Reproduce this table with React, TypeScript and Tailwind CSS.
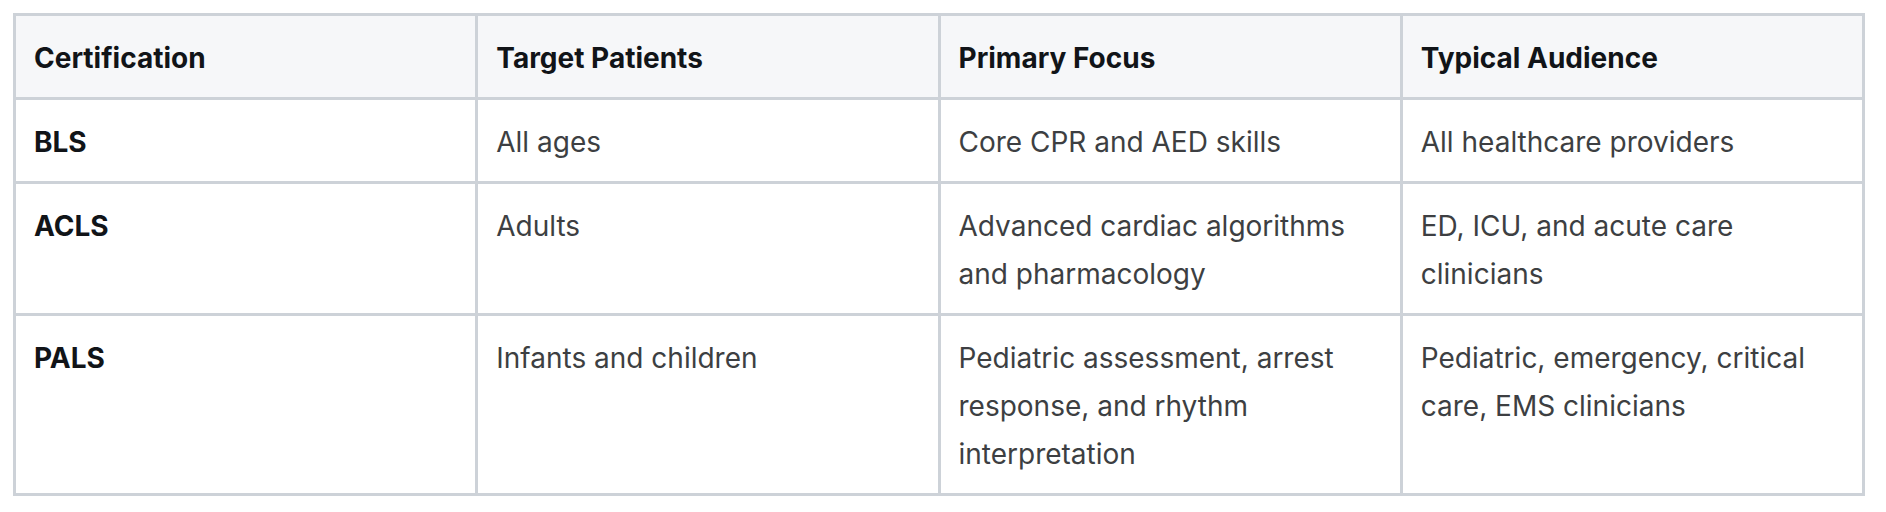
const rows = [
  {
    cert: "BLS",
    patients: "All ages",
    focus: "Core CPR and AED skills",
    audience: "All healthcare providers",
  },
  {
    cert: "ACLS",
    patients: "Adults",
    focus: "Advanced cardiac algorithms and pharmacology",
    audience: "ED, ICU, and acute care clinicians",
  },
  {
    cert: "PALS",
    patients: "Infants and children",
    focus: "Pediatric assessment, arrest response, and rhythm interpretation",
    audience: "Pediatric, emergency, critical care, EMS clinicians",
  },
];

const headers = ["Certification", "Target Patients", "Primary Focus", "Typical Audience"];

const cell =
  "align-top text-left px-[18px] pt-[18px] pb-[15px] border-r-[3px] border-b-[3px] border-[#cdd2d8]";

export default function App() {
  return (
    <div
      className="bg-white min-h-screen pl-[13px] pr-[21px] pt-[13px]"
      style={{ fontFamily: "Inter, 'Noto Sans', sans-serif" }}
    >
      <table className="w-full table-fixed border-separate border-spacing-0 border-l-[3px] border-t-[3px] border-[#cdd2d8] text-[28px] leading-[48px]">
        <thead>
          <tr className="bg-[#f6f7f9]">
            {headers.map((h) => (
              <th key={h} className={`${cell} font-bold text-[#111418]`}>
                {h}
              </th>
            ))}
          </tr>
        </thead>
        <tbody>
          {rows.map((r) => (
            <tr key={r.cert}>
              <td className={`${cell} font-bold text-[#111418]`}>{r.cert}</td>
              <td className={`${cell} text-[#3d3f42]`}>{r.patients}</td>
              <td className={`${cell} text-[#3d3f42]`}>{r.focus}</td>
              <td className={`${cell} text-[#3d3f42]`}>{r.audience}</td>
            </tr>
          ))}
        </tbody>
      </table>
    </div>
  );
}
